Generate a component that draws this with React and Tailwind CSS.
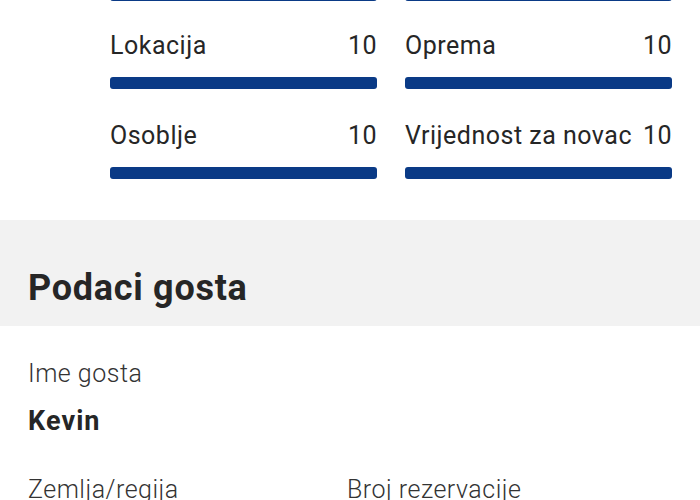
import React from "react";

const rows = [
  ["Lokacija", "10"],
  ["Oprema", "10"],
  ["Osoblje", "10"],
  ["Vrijednost za novac", "10"],
];

export default function App() {
  return (
    <div className="w-[700px] h-[500px] overflow-hidden bg-white font-['Roboto',sans-serif] text-[#262626]">
      <div className="pl-[110px] pr-[28px]">
        <div className="grid grid-cols-2 gap-x-[28px] -mt-[11px]">
          <div className="h-[12px] rounded-[3px] bg-[#0a3a86]" />
          <div className="h-[12px] rounded-[3px] bg-[#0a3a86]" />
        </div>
        <div className="grid grid-cols-2 gap-x-[28px] gap-y-[33px] mt-[31px]">
          {rows.map(([label, val]) => (
            <div key={label} className="flex flex-col">
              <div className="flex justify-between text-[25px] leading-[28px] tracking-[0.02em]">
                <span>{label}</span>
                <span>{val}</span>
              </div>
              <div className="mt-[17px] h-[12px] rounded-[3px] bg-[#0a3a86]" />
            </div>
          ))}
        </div>
      </div>
      <div className="mt-[41px] h-[106px] bg-[#f2f2f2] pl-[28px] pt-[47px]">
        <h2 className="text-[36px] leading-[42px] font-bold tracking-[0.02em] text-[#262626]">Podaci gosta</h2>
      </div>
      <div className="pl-[28px]">
        <div className="mt-[34px] text-[25px] leading-[28px] font-light tracking-[0.02em] text-[#333]">Ime gosta</div>
        <div className="mt-[18px] text-[27px] leading-[30px] font-bold tracking-[0.04em]">Kevin</div>
        <div className="mt-[40px] grid grid-cols-[319px_1fr] text-[25px] leading-[28px] font-light tracking-[0.02em] text-[#333]">
          <span>Zemlja/regija</span>
          <span>Broj rezervacije</span>
        </div>
      </div>
    </div>
  );
}
